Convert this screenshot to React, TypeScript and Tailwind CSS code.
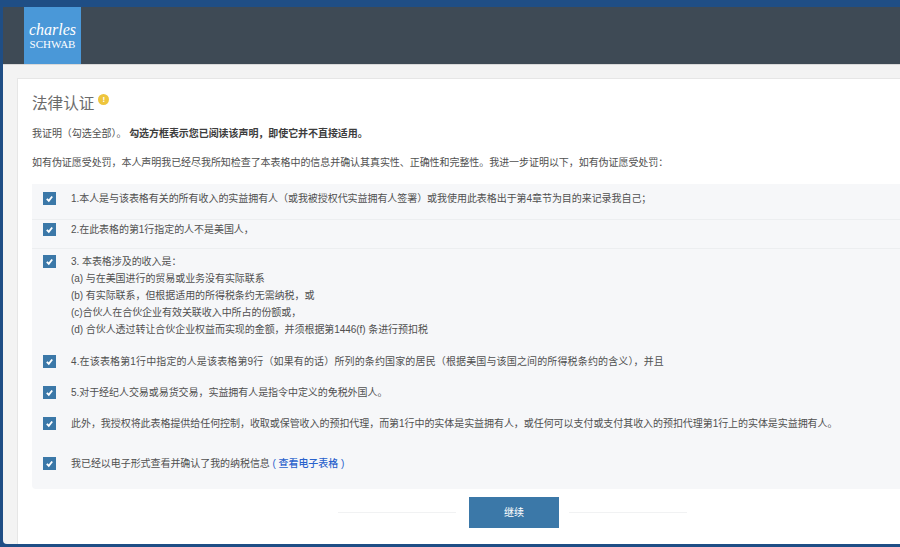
const font = { fontFamily: '"Liberation Sans", "Noto Sans CJK SC", sans-serif' };
const serif = { fontFamily: '"Liberation Serif", serif' };

function CheckBox() {
  return (
    <span className="flex h-[13px] w-[13px] shrink-0 items-center justify-center bg-[#3b78a8]">
      <svg width="9" height="9" viewBox="0 0 10 10" fill="none">
        <path d="M2 5.4 L4.2 7.5 L8 2.8" stroke="#fff" strokeWidth="2.1" />
      </svg>
    </span>
  );
}

function Row({ h, border, children }: { h: string; border?: boolean; children: React.ReactNode }) {
  return (
    <div className={`flex items-start pl-[11px] ${h} ${border ? "border-b border-[#eceef0]" : ""}`}>
      <CheckBox />
      <div className="ml-[15px] text-[10px] leading-[13px] tracking-[-0.06px] whitespace-nowrap text-[#505050]">{children}</div>
    </div>
  );
}

export default function App() {
  return (
    <div className="flex h-[547px] w-[900px] flex-col overflow-hidden bg-[#1f4e85]" style={font}>
      {/* Header */}
      <div className="mt-[7px] ml-[3px] flex h-[57px] shrink-0 bg-[#3e4a55] pl-[21px]">
        <div className="flex w-[57px] flex-col items-center justify-center bg-[#4a98d8] text-white" style={serif}>
          <span className="text-[16px] leading-[16px] italic">charles</span>
          <span className="text-[11px] leading-[12px]">SCHWAB</span>
        </div>
      </div>

      {/* Page body */}
      <div className="mb-[3px] ml-[3px] min-h-0 flex-1 rounded-bl-[4px] border-t border-[#d9d9d9] bg-[#f3f3f3] pt-[13px] pl-[14px]">
        <div className="h-full border-t border-l border-[#e6e6e6] bg-white pt-[13px]">
          <div className="flex items-start pl-[14px]">
            <h1 className="text-[15.6px] leading-[24px] text-[#6b6b6b]">法律认证</h1>
            <span className="mt-[2px] ml-[4px] flex h-[11px] w-[11px] items-center justify-center rounded-full bg-[#eec53d] text-[8px] leading-none font-bold text-white">!</span>
          </div>
          <p className="mt-[10px] pl-[14px] text-[10px] leading-[16px] tracking-[-0.06px] text-[#505050]">
            我证明（勾选全部）。 <b className="text-[#3d3d3d]">勾选方框表示您已阅读该声明，即使它并不直接适用。</b>
          </p>
          <p className="mt-[13px] pl-[14px] text-[10px] leading-[16px] tracking-[-0.06px] text-[#505050]">
            如有伪证愿受处罚，本人声明我已经尽我所知检查了本表格中的信息并确认其真实性、正确性和完整性。我进一步证明以下，如有伪证愿受处罚：
          </p>

          {/* Certification list */}
          <div className="mt-[13px] ml-[14px] h-[305px] rounded-bl-[4px] bg-[#f6f7f9] pt-[8px]">
            <Row h="h-[28px]" border>1.本人是与该表格有关的所有收入的实益拥有人（或我被授权代实益拥有人签署）或我使用此表格出于第4章节为目的来记录我自己；</Row>
            <div className="h-[3px]" />
            <Row h="h-[26px]" border>2.在此表格的第1行指定的人不是美国人，</Row>
            <div className="h-[6px]" />
            <Row h="h-[100px]">
              <div className="-mt-[2px]">
                <div className="leading-[17px]">3. 本表格涉及的收入是：</div>
                <div className="leading-[17px]">(a) 与在美国进行的贸易或业务没有实际联系</div>
                <div className="leading-[17px]">(b) 有实际联系，但根据适用的所得税条约无需纳税，或</div>
                <div className="leading-[17px]">(c)合伙人在合伙企业有效关联收入中所占的份额或，</div>
                <div className="leading-[17px]">(d) 合伙人透过转让合伙企业权益而实现的金额，并须根据第1446(f) 条进行预扣税</div>
              </div>
            </Row>
            <Row h="h-[31px]">
              <span className="tracking-[0.14px]">4.在该表格第1行中指定的人是该表格第9行（如果有的话）所列的条约国家的居民（根据美国与该国之间的所得税条约的含义），并且</span>
            </Row>
            <Row h="h-[31px]">5.对于经纪人交易或易货交易，实益拥有人是指令中定义的免税外国人。</Row>
            <Row h="h-[40px]">此外，我授权将此表格提供给任何控制，收取或保管收入的预扣代理，而第1行中的实体是实益拥有人，或任何可以支付或支付其收入的预扣代理第1行上的实体是实益拥有人。</Row>
            <Row h="h-[31px]">
              我已经以电子形式查看并确认了我的纳税信息 <span className="font-medium text-[#2a62cc]">( 查看电子表格 )</span>
            </Row>
          </div>

          {/* Continue */}
          <div className="mt-[8px] flex items-center justify-center pl-[107px]">
            <div className="mr-[13px] h-px w-[118px] bg-[#f1f2f3]" />
            <button className="h-[31px] w-[90px] bg-[#3b78a8] text-[10px] text-white">继续</button>
            <div className="ml-[10px] h-px w-[118px] bg-[#f1f2f3]" />
          </div>
        </div>
      </div>
    </div>
  );
}
